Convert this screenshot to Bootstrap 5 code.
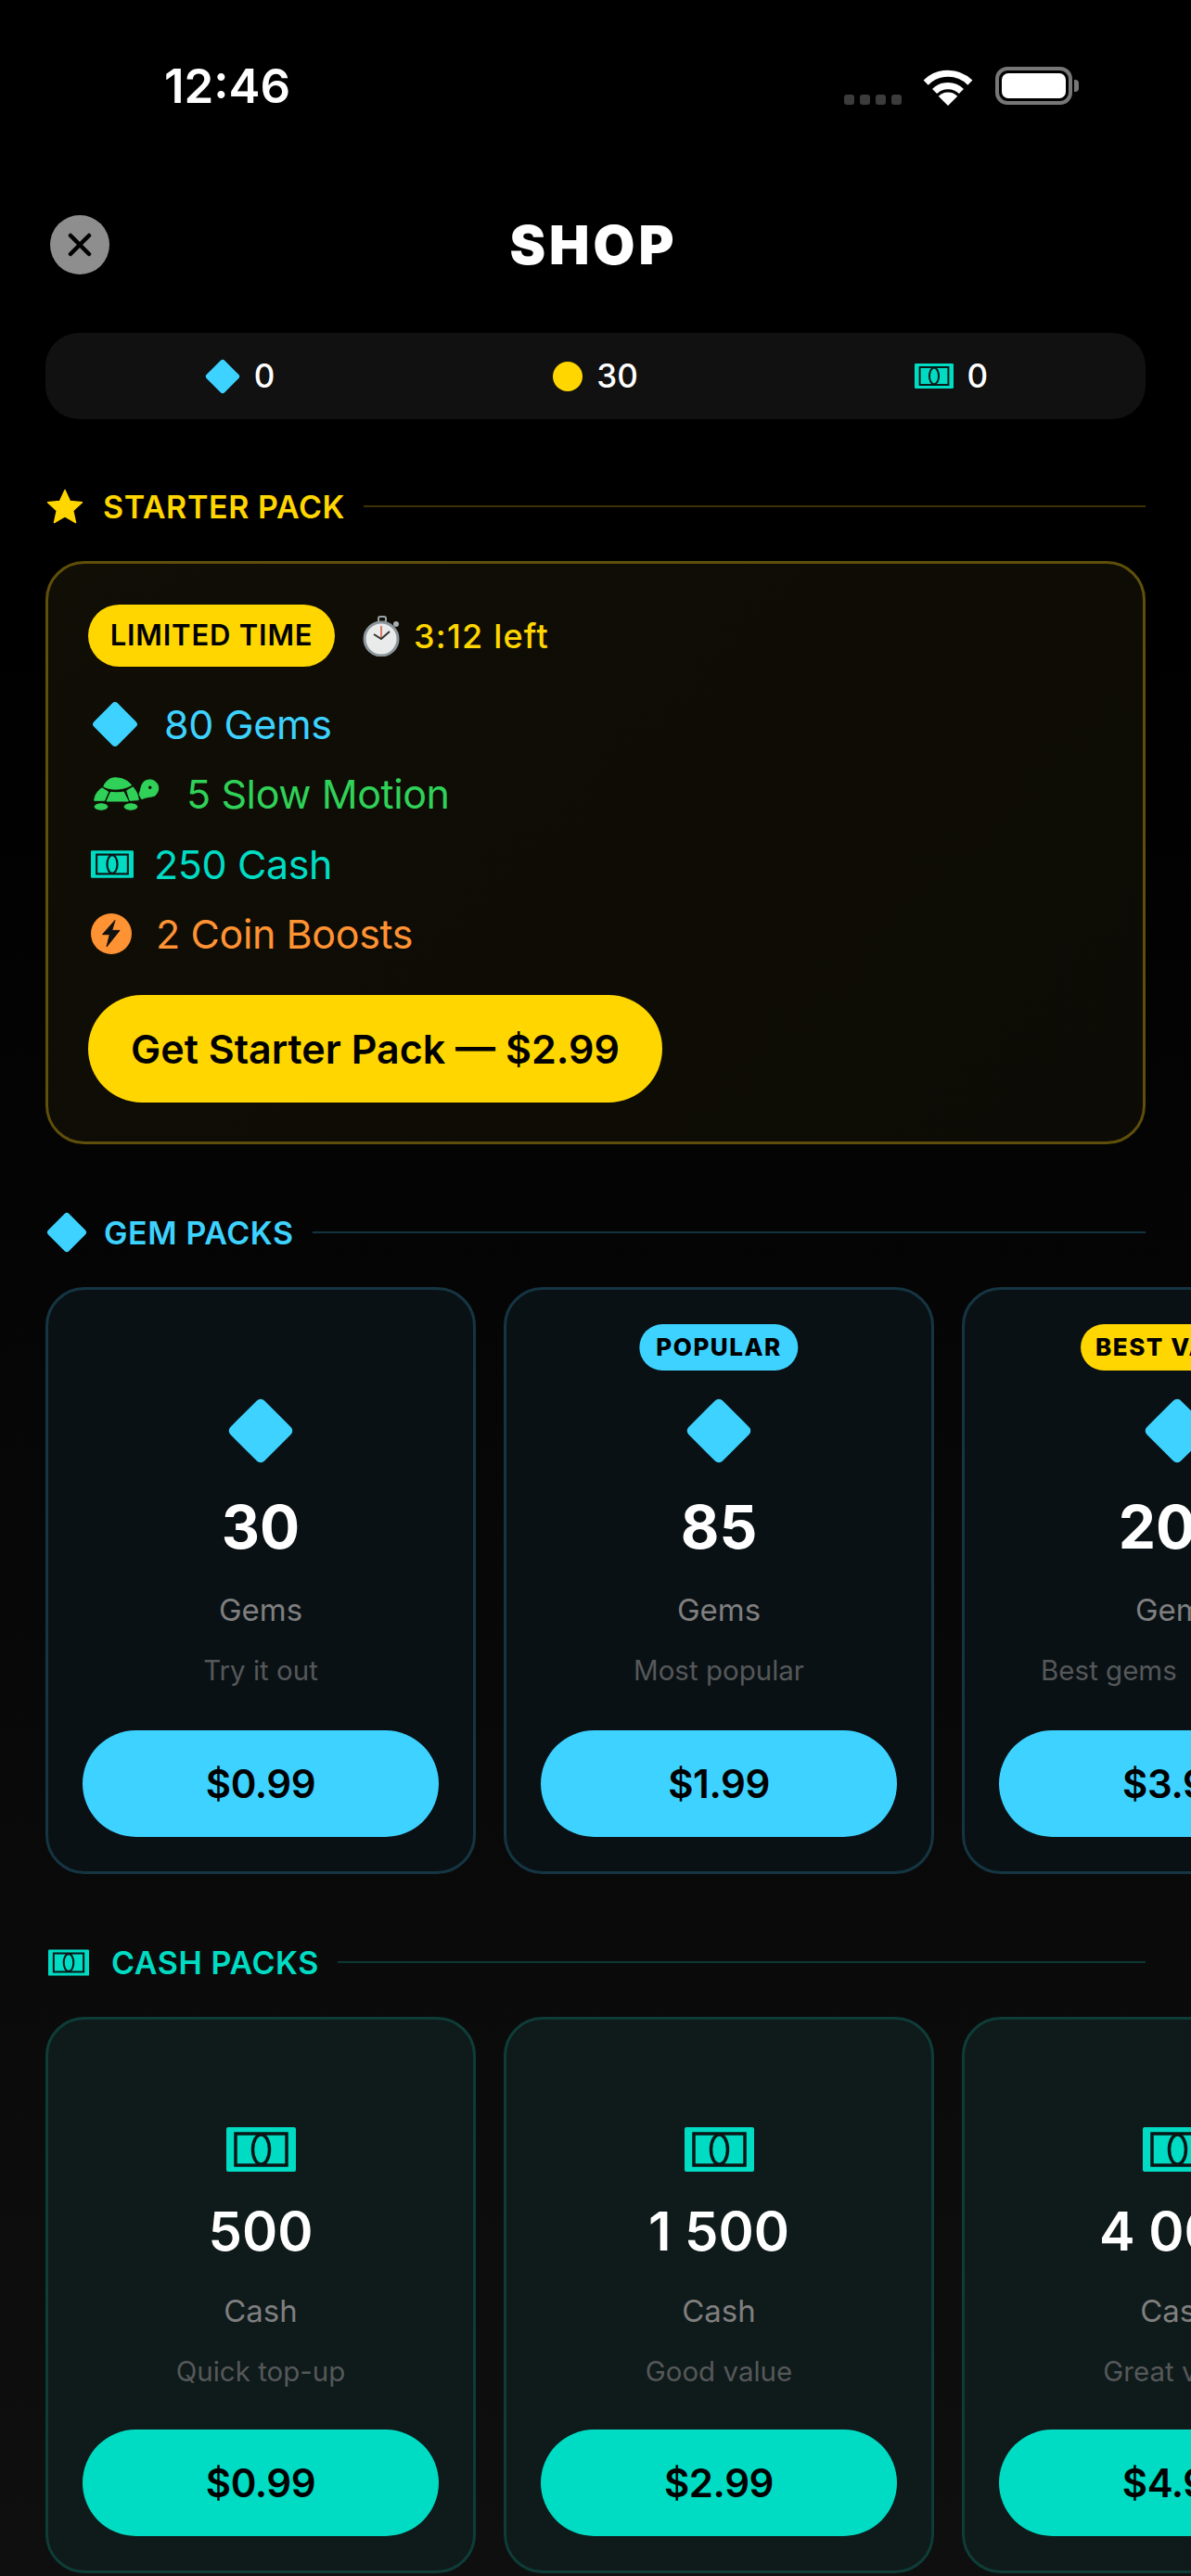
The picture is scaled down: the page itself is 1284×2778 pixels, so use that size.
<!DOCTYPE html>
<html lang="en">
<head>
  <meta charset="UTF-8" />
  <meta name="viewport" content="width=device-width, initial-scale=1" />
  <title>Shop</title>
  <link href="https://cdn.jsdelivr.net/npm/bootstrap@5.3.0/dist/css/bootstrap.min.css" rel="stylesheet" />
  <style>
    html, body { height: 2778px; overflow: hidden; }
    body { background: linear-gradient(180deg, #000 0%, #000 25%, #0f0f0f 100%); color: #fff; font-family: Inter, "Liberation Sans", sans-serif; }
    .status-row { height: 190px; padding: 72px 121px 0 177px; }
    .status-time { font-size: 51px; font-weight: 600; line-height: 42px; }
    .sig-dot { width: 11px; height: 11px; border-radius: 3px; background: #3c3c3c; }
    .sig-dots { gap: 6px; margin: 30px 21px 0 0; }
    .batt { width: 83px; height: 41px; border: 4px solid #777; border-radius: 13px; padding: 3px; margin-left: 22px; }
    .batt-fill { background: #fff; height: 100%; border-radius: 7px; }
    .batt-nub { width: 5px; height: 13px; background: #777; border-radius: 0 4px 4px 0; margin: 14px 0 0 2px; }
    .shop-head { display: grid; grid-template-columns: 1fr auto 1fr; align-items: center; height: 64px; margin: 42px 58px 0 54px; }
    .shut-btn { width: 64px; height: 64px; background: #8e8e8e; border: 0; }
    .shop-title { font-size: 58px; font-weight: 900; letter-spacing: 4px; line-height: 64px; margin: 0; }
    .bal-bar { height: 93px; margin: 63px 49px 0; padding: 0 18px; background: #111; border-radius: 36px; font-size: 35px; font-weight: 500; }
    .bal-item { gap: 15px; }
    .sec-head { margin: 0 49px; height: 40px; font-size: 34px; font-weight: 600; letter-spacing: .6px; }
    .sec-line { height: 2px; margin-left: 20px; flex: 1; }
    .c-gold { color: #ffd600; } .c-gem { color: #3dd2ff; } .c-cash { color: #00dcc4; }
    .c-green { color: #30d158; } .c-orange { color: #ff9233; }
    .line-gold { background: #3d3206; } .line-gem { background: #123442; } .line-cash { background: #0c3733; }
    .starter { margin: 39px 49px 0; height: 629px; padding: 44px 43px; background: linear-gradient(135deg, #100e05, #0c0b05); border: 3px solid #5f4f0a; border-radius: 42px; }
    .lim-pill { height: 67px; width: 266px; background: #ffd600; color: #000; font-size: 31px; font-weight: 600; letter-spacing: .8px; }
    .left-time { font-size: 36px; font-weight: 500; letter-spacing: 1.2px; }
    .perk-list { margin-top: 24px; }
    .perk { height: 75.5px; font-size: 43px; letter-spacing: -.4px; }
    .get-btn { width: 619px; height: 116px; background: #ffd600; color: #000; font-size: 43px; font-weight: 600; border: 0; margin-top: 28px; }
    .pack-row { display: flex; gap: 30px; margin: 39px 0 0 49px; width: 1500px; }
    .pack { position: relative; width: 464px; flex: none; padding: 116px 39px 0; border-width: 3px; border-radius: 42px; align-items: center; text-align: center; }
    .pack-gem { height: 633px; background: #0a1115; border-color: #153543; }
    .pack-cash { height: 600px; background: #0f1a1a; border-color: #0e3d38; }
    .pack-num { font-size: 64px; font-weight: 700; line-height: 76px; margin-top: 30px; color: #fff; }
    .pack-cash .pack-num { font-size: 58px; font-weight: 600; line-height: 70px; margin-top: 29px; }
    .pack-lbl { font-size: 33px; line-height: 40px; color: #7f7f7f; margin-top: 31px; }
    .pack-txt { font-size: 29.5px; line-height: 36px; color: #555859; margin-top: 27px; }
    .pack-buy { width: 384px; height: 115px; border: 0; color: #000; font-size: 42px; font-weight: 600; letter-spacing: -.4px; margin-top: 47px; }
    .pack-cash .pack-buy { margin-top: 45px; }
    .buy-gem { background: #3dd2ff; } .buy-cash { background: #00dcc4; }
    .flag { position: absolute; top: 37px; left: 50%; transform: translateX(-50%); height: 50px; color: #000; font-size: 26px; font-weight: 800; letter-spacing: 1.5px; line-height: 50px; padding: 0 18px; border-radius: 25px; }
    .flag-best { background: #ffd600; padding: 0 16px; }
    .buy-gem:hover, .buy-cash:hover { color: #000; }
  </style>
</head>
<body>
  <svg width="0" height="0" class="d-block">
    <symbol id="gem" viewBox="0 0 100 100"><rect x="14" y="14" width="72" height="72" rx="8" fill="#3dd2ff" transform="rotate(45 50 50)" /></symbol>
    <symbol id="cash" viewBox="0 0 75 48">
      <rect width="75" height="48" rx="2" fill="#00dcc4" />
      <rect x="10" y="7" width="55" height="34" fill="none" stroke="#0b1414" stroke-width="3.5" />
      <ellipse cx="37.5" cy="24" rx="9" ry="16" fill="none" stroke="#0b1414" stroke-width="3.5" />
    </symbol>
  </svg>

  <div class="status-row d-flex justify-content-between">
    <div class="status-time">12:46</div>
    <div class="d-flex align-items-start">
      <div class="sig-dots d-flex"><span class="sig-dot"></span><span class="sig-dot"></span><span class="sig-dot"></span><span class="sig-dot"></span></div>
      <svg width="58" height="42" viewBox="0 0 56 41">
        <path d="M4.7 16.7A33 33 0 0 1 51.3 16.7M13.9 25.9A20 20 0 0 1 42.1 25.9" fill="none" stroke="#fff" stroke-width="7" />
        <path d="M28 41L18 31A14 14 0 0 1 38 31Z" fill="#fff" />
      </svg>
      <div class="batt"><div class="batt-fill"></div></div>
      <div class="batt-nub"></div>
    </div>
  </div>

  <div class="shop-head">
    <button class="shut-btn btn rounded-circle p-0 d-flex align-items-center justify-content-center" type="button" aria-label="Close">
      <svg width="28" height="28" viewBox="0 0 28 28"><path d="M4 4L24 24M24 4L4 24" stroke="#000" stroke-width="4.5" stroke-linecap="round" /></svg>
    </button>
    <h1 class="shop-title">SHOP</h1>
    <div></div>
  </div>

  <div class="bal-bar d-flex align-items-center">
    <div class="bal-item col-4 d-flex justify-content-center align-items-center"><svg width="38" height="38"><use href="#gem" /></svg><span>0</span></div>
    <div class="bal-item col-4 d-flex justify-content-center align-items-center"><svg width="32" height="32"><circle cx="16" cy="16" r="16" fill="#ffd600" /></svg><span>30</span></div>
    <div class="bal-item col-4 d-flex justify-content-center align-items-center"><svg width="42" height="27"><use href="#cash" /></svg><span>0</span></div>
  </div>

  <div class="sec-head d-flex align-items-center c-gold" style="margin-top:74px">
    <svg width="40" height="38" viewBox="0 0 42 40" style="margin:0 21px 0 1px"><path d="M21 1.5L26.800 14.200L40.500 15.600L30.200 24.900L33.200 38.500L21 31.500L8.800 38.500L11.800 24.900L1.500 15.600L15.200 14.200Z" fill="#ffd600" stroke="#ffd600" stroke-width="1.500" stroke-linejoin="round" /></svg>
    <span>STARTER PACK</span><div class="sec-line line-gold"></div>
  </div>

  <div class="starter">
    <div class="d-flex align-items-center">
      <span class="lim-pill rounded-pill d-flex align-items-center justify-content-center">LIMITED TIME</span>
      <svg width="42" height="44" viewBox="0 0 42 44" style="margin:0 13px 0 30px">
        <rect x="17" y="1" width="8" height="6" rx="2" fill="none" stroke="#9aa3a8" stroke-width="2" />
        <circle cx="36" cy="9" r="3" fill="#a7aeb2" />
        <circle cx="20" cy="25" r="18" fill="#e9eaea" stroke="#8c959b" stroke-width="3" />
        <path d="M20 11V25" stroke="#d9573a" stroke-width="1.500" /><path d="M12 20L20 25L29 17" fill="none" stroke="#333" stroke-width="2" />
      </svg>
      <span class="left-time c-gold">3:12 left</span>
    </div>
    <div class="perk-list">
      <div class="perk d-flex align-items-center c-gem"><svg width="50" height="50" style="margin:0 28px 0 4px"><use href="#gem" /></svg>80 Gems</div>
      <div class="perk d-flex align-items-center c-green">
        <svg width="73" height="37" viewBox="0 0 73 37" style="margin:0 29px 0 4px" fill="#30d158" stroke="#30d158" stroke-linejoin="round">
          <path d="M12.700 10.300C15 4 20 .800 25 .800C33 .800 39 4 42.700 8.700C34 14 20 14.500 12.700 10.300Z" />
          <path d="M11 11.800L17.700 16L13.700 25.300H2.700C3 20 6 15 11 11.800Z" />
          <path d="M20.300 16.300C25 17 30 17 34.300 16L39.300 26H16Z" />
          <path d="M37.700 14.700L44.300 10.800C47.500 14.500 50 19 50.300 24.700L41 25.300Z" />
          <path d="M51 18.700C53 14 53 8 56 5.300C60 2 66 2 69.500 6C73 10 72.500 16 67.700 20.300C64 21.500 59.300 21.300 53.700 23.700Z" />
          <ellipse cx="10" cy="32" rx="7" ry="3.200" /><ellipse cx="42" cy="32" rx="7" ry="3.200" />
          <circle cx="62.700" cy="11.300" r="1.700" fill="#0f0d05" stroke="none" />
        </svg>5 Slow Motion</div>
      <div class="perk d-flex align-items-center c-cash"><svg width="46" height="30" style="margin:0 22px 0 3px"><use href="#cash" /></svg>250 Cash</div>
      <div class="perk d-flex align-items-center c-orange">
        <svg width="44" height="44" viewBox="0 0 44 44" style="margin:0 26px 0 3px"><circle cx="22" cy="22" r="22" fill="#ff9233" /><path d="M26 7.500L12.500 22.700H20.300L17 36L31 18.400H22.700Z" fill="#111" stroke="#111" stroke-width="1" stroke-linejoin="round" /></svg>2 Coin Boosts</div>
    </div>
    <button class="get-btn btn rounded-pill" type="button">Get Starter Pack — $2.99</button>
  </div>

  <div class="sec-head d-flex align-items-center c-gem" style="margin-top:75px">
    <svg width="44" height="44" style="margin:0 18px 0 1px"><use href="#gem" /></svg>
    <span>GEM PACKS</span><div class="sec-line line-gem"></div>
  </div>

  <div class="pack-row">
    <div class="pack pack-gem card">
      <svg width="72" height="72"><use href="#gem" /></svg>
      <div class="pack-num">30</div><div class="pack-lbl">Gems</div><div class="pack-txt">Try it out</div>
      <button class="pack-buy buy-gem btn rounded-pill" type="button">$0.99</button>
    </div>
    <div class="pack pack-gem card">
      <span class="flag buy-gem">POPULAR</span>
      <svg width="72" height="72"><use href="#gem" /></svg>
      <div class="pack-num">85</div><div class="pack-lbl">Gems</div><div class="pack-txt">Most popular</div>
      <button class="pack-buy buy-gem btn rounded-pill" type="button">$1.99</button>
    </div>
    <div class="pack pack-gem card">
      <span class="flag flag-best text-nowrap">BEST VALUE</span>
      <svg width="72" height="72"><use href="#gem" /></svg>
      <div class="pack-num">200</div><div class="pack-lbl">Gems</div><div class="pack-txt text-nowrap">Best gems&ensp;per dollar</div>
      <button class="pack-buy buy-gem btn rounded-pill" type="button">$3.99</button>
    </div>
  </div>

  <div class="sec-head d-flex align-items-center c-cash" style="margin-top:75px">
    <svg width="44" height="29" class="me-4" style="margin-left:3px"><use href="#cash" /></svg>
    <span>CASH PACKS</span><div class="sec-line line-cash"></div>
  </div>

  <div class="pack-row">
    <div class="pack pack-cash card">
      <svg width="75" height="48"><use href="#cash" /></svg>
      <div class="pack-num">500</div><div class="pack-lbl">Cash</div><div class="pack-txt">Quick top-up</div>
      <button class="pack-buy buy-cash btn rounded-pill" type="button">$0.99</button>
    </div>
    <div class="pack pack-cash card">
      <svg width="75" height="48"><use href="#cash" /></svg>
      <div class="pack-num">1 500</div><div class="pack-lbl">Cash</div><div class="pack-txt">Good value</div>
      <button class="pack-buy buy-cash btn rounded-pill" type="button">$2.99</button>
    </div>
    <div class="pack pack-cash card">
      <svg width="75" height="48"><use href="#cash" /></svg>
      <div class="pack-num">4 000</div><div class="pack-lbl">Cash</div><div class="pack-txt">Great value</div>
      <button class="pack-buy buy-cash btn rounded-pill" type="button">$4.99</button>
    </div>
  </div>
</body>
</html>
